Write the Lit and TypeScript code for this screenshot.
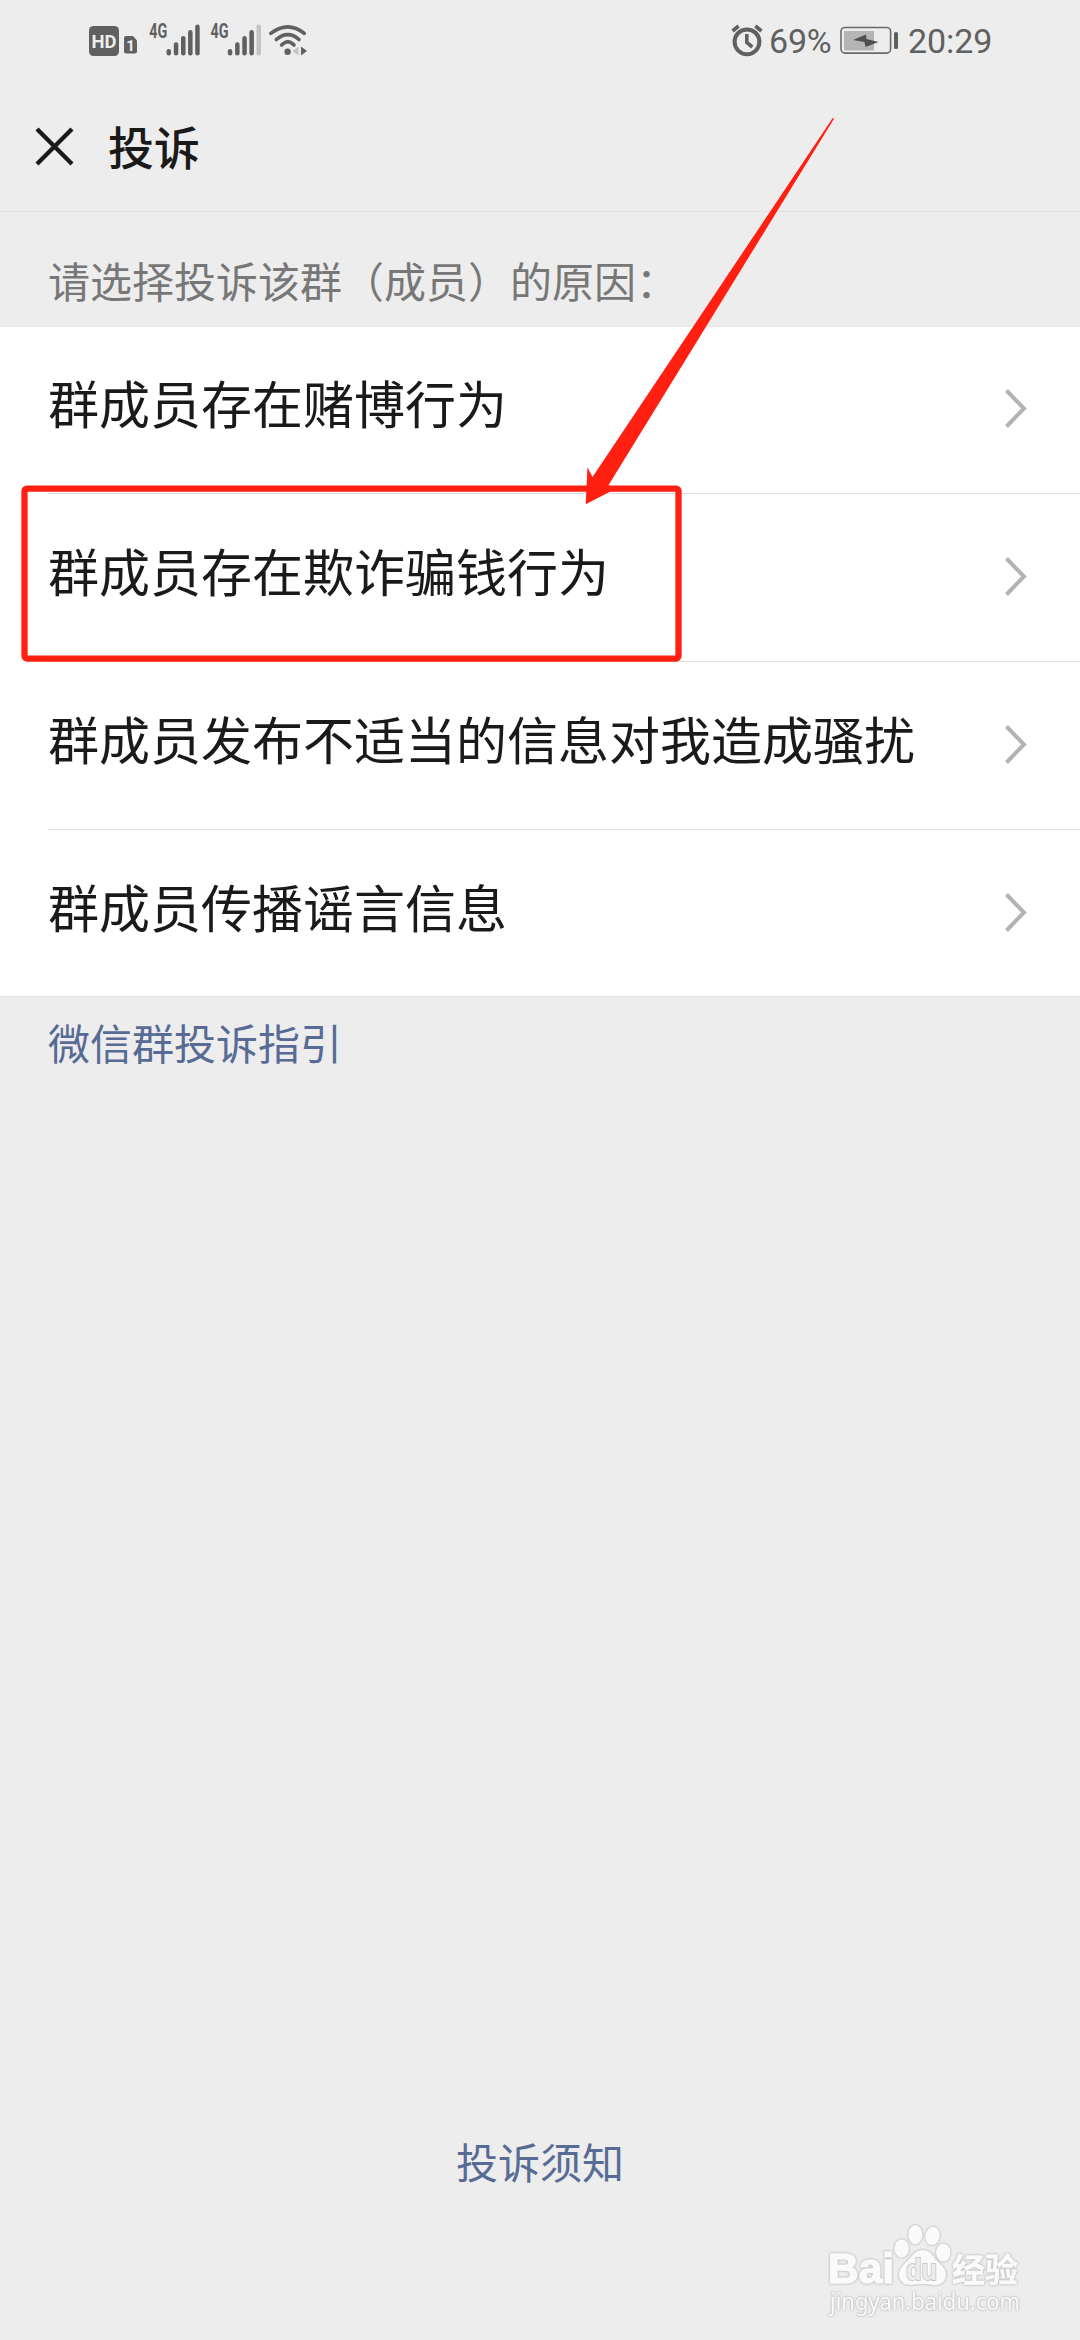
import { LitElement, html, css, svg } from "lit";
import { customElement, property } from "lit/decorators.js";

const SIGNAL_BARS = [
  { x: 0, top: 25 },
  { x: 7.3, top: 18.2 },
  { x: 14.5, top: 12 },
  { x: 21.6, top: 6 },
  { x: 28.7, top: 0.6 },
];

@customElement("status-bar")
class StatusBar extends LitElement {
  static styles = css`
    :host {
      display: flex;
      justify-content: space-between;
      height: 80px;
      padding: 0 90px 0 89px;
      box-sizing: border-box;
      color: #606060;
      font-family: Roboto, sans-serif;
    }
    .group {
      display: flex;
      align-items: flex-start;
    }
    .icons {
      display: block;
      flex: none;
    }
    .badge {
      font: 700 18.5px Roboto, sans-serif;
      fill: #ededed;
    }
    .sim {
      font: 700 15px Roboto, sans-serif;
      fill: #ededed;
    }
    .net {
      font: 700 19.5px Roboto, sans-serif;
      fill: #606060;
    }
    .label {
      font-size: 34px;
      line-height: 40px;
      padding-top: 21px;
      white-space: nowrap;
    }
    .percent {
      width: 70px;
      letter-spacing: -0.2px;
    }
    .time {
      width: 82px;
      letter-spacing: -0.1px;
    }
  `;

  signal(x: number, strength: number) {
    return svg`
      <text class="net" x=${x - 19.5} y="38.4" textLength="18" lengthAdjust="spacingAndGlyphs">4G</text>
      ${SIGNAL_BARS.map(
        (b, i) => svg`<rect x=${x - 2.2 + b.x} y=${24 + b.top} width="4.5" height=${31.4 - b.top} rx="2.2"
          fill=${i < strength ? "#606060" : "#c3c3c3"}></rect>`
      )}`;
  }

  render() {
    return html`
      <div class="group">
        <svg class="icons" width="220" height="80" viewBox="89 0 220 80">
          <rect x="89" y="26" width="30" height="30" rx="4.5" fill="#606060"></rect>
          <text class="badge" x="91.6" y="47.6" textLength="25" lengthAdjust="spacingAndGlyphs">HD</text>
          <path d="M126 36h7l4 4.5v11a2 2 0 0 1-2 2h-9a2 2 0 0 1-2-2v-13.500a2 2 0 0 1 2-2z" fill="#606060"></path>
          <text class="sim" x="126.200" y="50.500">1</text>
          ${this.signal(168.7, 5)} ${this.signal(230, 4)}
          <g fill="none" stroke="#606060" stroke-width="3.600" stroke-linecap="round">
            <path d="M270.800 33.400Q288 20.400 304.300 33.400"></path>
            <path d="M276.300 39.500Q288 29.600 299 39.500"></path>
            <path d="M281.600 45Q288 38.500 294 45"></path>
          </g>
          <circle cx="287.600" cy="51.700" r="3.200" fill="#606060"></circle>
          <path d="M298.500 46.500v9l-6-4.500z" fill="#c3c3c3"></path>
          <path d="M301 46.500l6 4.500-6 4.500z" fill="#606060"></path>
        </svg>
      </div>
      <div class="group">
        <svg class="icons" width="38" height="80" viewBox="731 0 38 80">
          <g fill="none" stroke="#606060">
            <circle cx="747" cy="41.800" r="12.400" stroke-width="4"></circle>
            <path d="M746.800 34v8.500l5.500 4.500" stroke-width="3.600"></path>
            <path d="M732.600 31l6-5M761.400 31l-6-5" stroke-width="3.600"></path>
          </g>
        </svg>
        <span class="label percent">69%</span>
        <svg class="icons" width="69" height="80" viewBox="839 0 69 80">
          <rect x="841" y="27.500" width="49.600" height="25.600" rx="4" fill="none" stroke="#6a6a6a" stroke-width="1.600"></rect>
          <rect x="844" y="31" width="30" height="19.500" fill="#b5b5b5"></rect>
          <path d="M853 40l13-5.500 0.500 4.500 12 3-13 5-1-5z" fill="#505050"></path>
          <rect x="894" y="32" width="4" height="17" rx="1.500" fill="#606060"></rect>
        </svg>
        <span class="label time">20:29</span>
      </div>
    `;
  }
}

@customElement("reason-row")
class ReasonRow extends LitElement {
  @property() label = "";

  static styles = css`
    :host {
      display: block;
      padding-left: 48px;
    }
    .row {
      display: flex;
      align-items: center;
      justify-content: space-between;
      height: 168px;
      box-sizing: border-box;
      padding-right: 53px;
      border-bottom: 1px solid #dfdfdf;
    }
    :host([last]) .row {
      border-bottom: none;
      height: 166px;
      padding-top: 2px;
    }
    .text {
      font-size: 51px;
      line-height: 60px;
      padding-bottom: 16px;
      color: #1a1a1a;
      white-space: nowrap;
    }
    .chevron {
      display: block;
      width: 24px;
      height: 44px;
      padding-bottom: 2px;
    }
  `;

  render() {
    return html`
      <div class="row">
        <span class="text">${this.label}</span>
        <svg class="chevron" viewBox="0 0 24 44">
          <path d="M3.500 3.500L21 21.500 3.500 39.500" fill="none" stroke="#b3b3b3" stroke-width="4"></path>
        </svg>
      </div>
    `;
  }
}

@customElement("app-root")
class AppRoot extends LitElement {
  static styles = css`
    :host {
      display: block;
      font-family: "Noto Sans CJK SC", sans-serif;
    }
    .page {
      position: relative;
      display: flex;
      flex-direction: column;
      width: 1080px;
      height: 2340px;
      background: #ededed;
      overflow: hidden;
    }
    .header {
      display: flex;
      align-items: center;
      gap: 33px;
      height: 132px;
      box-sizing: border-box;
      padding: 0 0 0 34px;
      border-bottom: 1px solid #e2e2e2;
    }
    .close {
      display: block;
      width: 41px;
      height: 41px;
      padding-top: 1px;
    }
    .title {
      margin: 0;
      padding-bottom: 2px;
      font-size: 46px;
      font-weight: 500;
      line-height: 60px;
      color: #1a1a1a;
    }
    .prompt {
      height: 114px;
      box-sizing: border-box;
      padding: 38px 48px 0;
      font-size: 42px;
      line-height: 60px;
      color: #777;
    }
    .list {
      background: #fff;
      height: 670px;
      box-sizing: border-box;
      box-shadow: inset 0 1px #e6e6e6;
    }
    .guide {
      flex: 1;
      padding: 15px 48px 0;
      font-size: 42px;
      line-height: 60px;
      color: #576b95;
      border-top: 1px solid #e2e2e2;
    }
    .notice {
      height: 209px;
      font-size: 42px;
      line-height: 60px;
      text-align: center;
      color: #576b95;
    }
    .markup {
      position: absolute;
      left: 0;
      top: 0;
    }
    .watermark {
      position: absolute;
      left: 820px;
      top: 2215px;
    }
    .mark {
      fill: #fafafa;
      filter: drop-shadow(0 0 0.8px #b4b4b4) drop-shadow(0 0 0.6px #d0d0d0);
    }
    .brand {
      font: 700 42px "Liberation Sans", sans-serif;
      stroke: #fafafa;
      stroke-width: 1.600px;
    }
    .du {
      font: 700 29px "Liberation Sans", sans-serif;
      fill: #ececec;
      stroke: #cbcbcb;
      stroke-width: 2px;
      paint-order: stroke;
    }
    .exp {
      font: 700 33px "Noto Sans CJK SC", sans-serif;
      stroke: #fafafa;
      stroke-width: 0.500px;
    }
    .domain {
      font: 400 23px "Noto Sans", sans-serif;
    }
  `;

  reasons = [
    "群成员存在赌博行为",
    "群成员存在欺诈骗钱行为",
    "群成员发布不适当的信息对我造成骚扰",
    "群成员传播谣言信息",
  ];

  render() {
    return html`
      <div class="page">
        <status-bar></status-bar>
        <div class="header">
          <svg class="close" viewBox="0 0 41 41">
            <path d="M3 3L38 38M38 3L3 38" stroke="#1a1a1a" stroke-width="4.300"></path>
          </svg>
          <h1 class="title">投诉</h1>
        </div>
        <div class="prompt">请选择投诉该群（成员）的原因：</div>
        <div class="list">
          ${this.reasons.map(
            (r, i) => html`<reason-row .label=${r} ?last=${i === this.reasons.length - 1}></reason-row>`
          )}
        </div>
        <div class="guide">微信群投诉指引</div>
        <div class="notice">投诉须知</div>

        <svg class="markup" width="1080" height="700" viewBox="0 0 1080 700">
          <rect x="24.500" y="488.600" width="654" height="170" rx="2.500" fill="none" stroke="#ff2012" stroke-width="6.300"></rect>
          <path d="M585.700 504.300L587.500 467.300L592.500 477L832.700 118L834 118.700L608.300 485.500L618.600 487.300Z" fill="#ff2012"></path>
        </svg>

        <svg class="watermark" width="210" height="110" viewBox="820 2215 210 110">
          <g class="mark">
            <text class="brand" x="828" y="2283" textLength="66" lengthAdjust="spacingAndGlyphs">Bai</text>
            <ellipse cx="901.700" cy="2248.500" rx="7.300" ry="9.300"></ellipse>
            <ellipse cx="915.300" cy="2234.700" rx="7" ry="9.700"></ellipse>
            <ellipse cx="932.500" cy="2236" rx="7.300" ry="9.300" transform="rotate(12 932.500 2236)"></ellipse>
            <ellipse cx="943.300" cy="2252.500" rx="7.300" ry="9"></ellipse>
            <path d="M922.500 2250c6 0 9 3 12 8 4 5 12 10 11.500 17-.5 7-5 10-11 10-5 0-8-1-12.500-1s-8 1-12 1c-7 0-11.500-4-11.500-10 0-7 6-12 11-17 4-5 7-8 12.500-8z"></path>
            <text class="exp" x="952" y="2282" textLength="66" lengthAdjust="spacingAndGlyphs">经验</text>
            <text class="domain" x="830" y="2310" textLength="190" lengthAdjust="spacingAndGlyphs">jingyan.baidu.com</text>
          </g>
          <text class="du" x="906" y="2280" textLength="31" lengthAdjust="spacingAndGlyphs">du</text>
        </svg>
      </div>
    `;
  }
}
